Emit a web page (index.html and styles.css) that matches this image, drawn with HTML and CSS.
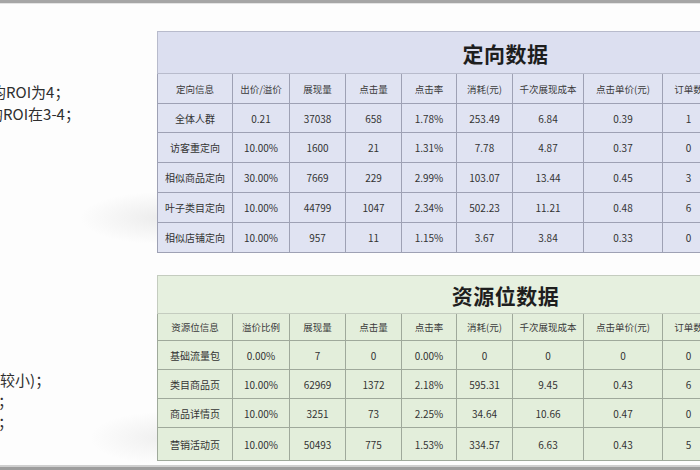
FILE: index.html
```html
<!DOCTYPE html>
<html lang="zh">
<head>
<meta charset="utf-8">
<link rel="stylesheet" href="styles.css">
</head>
<body>
<div class="page">
  <div class="topbar"></div>
  <div class="main">
    <div class="notes">
      <div class="note-group g1">
        <p class="ln l1">平均ROI为4；</p>
        <p class="ln l2">平均ROI在3-4；</p>
      </div>
      <div class="note-group g2">
        <p class="ln l3">(较小)；</p>
        <p class="ln l4">量；</p>
        <p class="ln l5">量；</p>
      </div>
    </div>
    <div class="tables">
      <table class="data blue">
        <colgroup>
          <col class="c1"><col class="c2"><col class="c3"><col class="c4"><col class="c5"><col class="c6"><col class="c7"><col class="c8"><col class="c9">
        </colgroup>
        <tr class="title-row"><td colspan="9" class="title">定向数据</td></tr>
        <tr class="head"><td>定向信息</td><td>出价/溢价</td><td>展现量</td><td>点击量</td><td>点击率</td><td>消耗(元)</td><td>千次展现成本</td><td>点击单价(元)</td><td>订单数</td></tr>
        <tr class="r29"><td>全体人群</td><td>0.21</td><td>37038</td><td>658</td><td>1.78%</td><td>253.49</td><td>6.84</td><td>0.39</td><td>1</td></tr>
        <tr><td>访客重定向</td><td>10.00%</td><td>1600</td><td>21</td><td>1.31%</td><td>7.78</td><td>4.87</td><td>0.37</td><td>0</td></tr>
        <tr><td>相似商品定向</td><td>30.00%</td><td>7669</td><td>229</td><td>2.99%</td><td>103.07</td><td>13.44</td><td>0.45</td><td>3</td></tr>
        <tr><td>叶子类目定向</td><td>10.00%</td><td>44799</td><td>1047</td><td>2.34%</td><td>502.23</td><td>11.21</td><td>0.48</td><td>6</td></tr>
        <tr><td>相似店铺定向</td><td>10.00%</td><td>957</td><td>11</td><td>1.15%</td><td>3.67</td><td>3.84</td><td>0.33</td><td>0</td></tr>
      </table>
      <table class="data green">
        <colgroup>
          <col class="c1"><col class="c2"><col class="c3"><col class="c4"><col class="c5"><col class="c6"><col class="c7"><col class="c8"><col class="c9">
        </colgroup>
        <tr class="title-row"><td colspan="9" class="title">资源位数据</td></tr>
        <tr class="head"><td>资源位信息</td><td>溢价比例</td><td>展现量</td><td>点击量</td><td>点击率</td><td>消耗(元)</td><td>千次展现成本</td><td>点击单价(元)</td><td>订单数</td></tr>
        <tr><td>基础流量包</td><td>0.00%</td><td>7</td><td>0</td><td>0.00%</td><td>0</td><td>0</td><td>0</td><td>0</td></tr>
        <tr><td>类目商品页</td><td>10.00%</td><td>62969</td><td>1372</td><td>2.18%</td><td>595.31</td><td>9.45</td><td>0.43</td><td>6</td></tr>
        <tr><td>商品详情页</td><td>10.00%</td><td>3251</td><td>73</td><td>2.25%</td><td>34.64</td><td>10.66</td><td>0.47</td><td>0</td></tr>
        <tr class="last"><td>营销活动页</td><td>10.00%</td><td>50493</td><td>775</td><td>1.53%</td><td>334.57</td><td>6.63</td><td>0.43</td><td>5</td></tr>
      </table>
    </div>
  </div>
  <div class="bottombar"></div>
</div>
</body>
</html>
```

FILE: styles.css
```css
html, body {
  margin: 0;
  padding: 0;
  overflow: hidden;
  background: #fdfdfd;
}

.page {
  width: 700px;
  height: 470px;
  display: flex;
  flex-direction: column;
  overflow: hidden;
  font-family: "Noto Sans CJK SC", "Noto Sans", sans-serif;
  color: #333;
  background:
    radial-gradient(ellipse 80px 26px at 160px 218px, rgba(150,150,150,0.16), rgba(150,150,150,0) 100%),
    radial-gradient(ellipse 70px 26px at 160px 438px, rgba(150,150,150,0.13), rgba(150,150,150,0) 100%),
    #fdfdfd;
}

.topbar {
  height: 3px;
  background: #a6a6a6;
  border-bottom: 1px solid #e4e4e4;
  flex: none;
}

.bottombar {
  margin-top: auto;
  height: 3px;
  border-top: 2px solid #cfcfcf;
  background: #9d9d9d;
  flex: none;
}

.main {
  display: flex;
  flex: none;
}

.notes {
  width: 157px;
  flex: none;
  overflow: hidden;
}

.note-group {
  font-size: 15px;
  color: #2e2e2e;
}

.g1 {
  margin-top: 77px;
  line-height: 22px;
}

.g2 {
  margin-top: 244px;
  line-height: 21px;
}

.ln {
  margin: 0;
  white-space: nowrap;
}

.l1 { margin-left: -24px; }
.l2 { margin-left: -27px; }
.l3 { margin-left: -5px; }
.l4 { margin-left: -17px; }
.l5 { margin-left: -17px; }

.tables {
  flex: none;
  display: flex;
  flex-direction: column;
}

.data {
  border-collapse: collapse;
  table-layout: fixed;
  width: 557px;
  font-size: 10px;
  text-align: center;
}

.data.blue { margin-top: 27px; }
.data.green { margin-top: 22px; }

.c1 { width: 75px; }
.c2 { width: 57px; }
.c3 { width: 56px; }
.c4 { width: 56px; }
.c5 { width: 55px; }
.c6 { width: 56px; }
.c7 { width: 71px; }
.c8 { width: 79px; }
.c9 { width: 52px; }

.data td {
  padding: 0;
  height: 29px;
  white-space: nowrap;
  overflow: hidden;
}

.data .title {
  height: 41px;
  padding-left: 139px;
  font-size: 21px;
  font-weight: 700;
  color: #1e1e1e;
  letter-spacing: 0.5px;
}

.data .head td {
  height: 29px;
  font-size: 9.5px;
  color: #3a3a3a;
}

.blue td {
  background: #e0e3f2;
  border: 1px solid #9ea1b4;
}

.blue .title {
  background: #dcdff0;
  border-color: #b8bbcc;
}

.blue .r29 td { height: 28px; }

.green td {
  background: #e3eedb;
  border: 1px solid #9fa99b;
  height: 28px;
}

.green .title {
  height: 37px;
  background: #e6f0df;
  border-color: #c4ccbf;
}

.green .head td { height: 26px; }

.green .last td { height: 32px; }
```
